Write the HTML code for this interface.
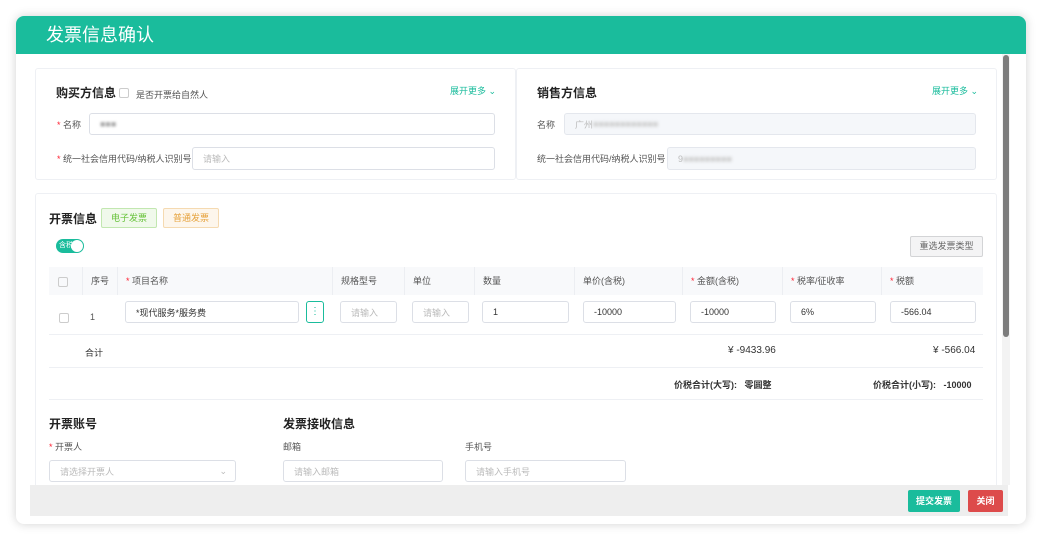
<!DOCTYPE html>
<html><head><meta charset="utf-8"><style>
*{box-sizing:border-box;margin:0;padding:0}
body{width:1042px;height:541px;background:#fff;position:relative;overflow:hidden;font-family:"Liberation Sans","Noto Sans CJK SC",sans-serif;color:#333}
.a{position:absolute}
.modal{left:16px;top:16px;width:1010px;height:508px;border-radius:8px;background:#fff;box-shadow:0 0 10px rgba(0,0,0,.18);overflow:hidden}
.hd{left:0;top:0;width:1010px;height:38px;background:#1abc9c;color:#fff;font-size:18px;line-height:38px;padding-left:30px}
.card{border:1px solid #eef0f4;border-radius:3px;background:#fff}
.t{font-size:12px;font-weight:bold;color:#222}
.s{font-size:9px;color:#555;white-space:nowrap}
.r{color:#f23}
.in{border:1px solid #dcdfe6;border-radius:3px;background:#fff;font-size:9px;color:#bbb;padding-left:10px;display:flex;align-items:center}
.dis{background:#f5f7fa;border-color:#e4e7ed}
.more{font-size:9px;color:#1abc9c}
.th{top:267px;height:28px;background:#f8f9fb;font-size:9px;color:#555;line-height:28px;padding-left:8px;border-right:1px solid #eceef2}
.ln{height:1px;background:#eef0f4;left:49px;width:934px}
.v{color:#333}
</style></head><body>
<div class="a modal">
<div class="a hd">发票信息确认</div>
</div>
<!-- buyer -->
<div class="a card" style="left:35px;top:68px;width:481px;height:112px"></div>
<div class="a t" style="left:56px;top:84px">购买方信息</div>
<div class="a" style="left:119px;top:88px;width:10px;height:10px;border:1px solid #ccc;border-radius:2px"></div>
<div class="a s" style="left:136px;top:88px">是否开票给自然人</div>
<div class="a more" style="left:450px;top:84px">展开更多 ⌄</div>
<div class="a s" style="left:57px;top:118px"><span class="r">* </span>名称</div>
<div class="a in" style="left:89px;top:113px;width:406px;height:22px"><span style="color:#aaa;filter:blur(1.2px)">■■■</span></div>
<div class="a s" style="left:57px;top:152px"><span class="r">* </span>统一社会信用代码/纳税人识别号</div>
<div class="a in" style="left:192px;top:147px;width:303px;height:23px">请输入</div>
<!-- seller -->
<div class="a card" style="left:516px;top:68px;width:481px;height:112px"></div>
<div class="a t" style="left:537px;top:84px">销售方信息</div>
<div class="a more" style="left:932px;top:84px">展开更多 ⌄</div>
<div class="a s" style="left:537px;top:118px">名称</div>
<div class="a in dis" style="left:564px;top:113px;width:412px;height:22px">广州<span style="filter:blur(1.5px);color:#ccc">■■■■■■■■■■■■</span></div>
<div class="a s" style="left:537px;top:152px">统一社会信用代码/纳税人识别号</div>
<div class="a in dis" style="left:667px;top:147px;width:309px;height:23px">9<span style="filter:blur(1.5px);color:#ccc">■■■■■■■■■</span></div>
<!-- invoice card -->
<div class="a card" style="left:35px;top:193px;width:962px;height:310px"></div>
<div class="a t" style="left:49px;top:210px">开票信息</div>
<div class="a" style="left:101px;top:208px;width:56px;height:20px;background:#f0f9eb;border:1px solid #c2e7b0;border-radius:2px;color:#67c23a;font-size:9px;text-align:center;line-height:18px">电子发票</div>
<div class="a" style="left:163px;top:208px;width:56px;height:20px;background:#fdf6ec;border:1px solid #f5dab1;border-radius:2px;color:#e6a23c;font-size:9px;text-align:center;line-height:18px">普通发票</div>
<div class="a" style="left:56px;top:239px;width:28px;height:14px;border-radius:7px;background:#1abc9c"><span style="position:absolute;left:3px;top:1px;font-size:7px;color:#fff">含税</span><span style="position:absolute;right:1px;top:1px;width:12px;height:12px;border-radius:50%;background:#fff"></span></div>
<div class="a" style="left:910px;top:236px;width:73px;height:21px;background:#f4f4f5;border:1px solid #d3d4d6;border-radius:2px;font-size:9px;color:#666;text-align:center;line-height:19px">重选发票类型</div>
<!-- table head -->
<div class="a th" style="left:49px;width:34px"><span style="display:inline-block;width:10px;height:10px;border:1px solid #ccc;border-radius:2px;vertical-align:middle;margin-left:1px"></span></div>
<div class="a th" style="left:83px;width:35px">序号</div>
<div class="a th" style="left:118px;width:215px"><span class="r">* </span>项目名称</div>
<div class="a th" style="left:333px;width:72px">规格型号</div>
<div class="a th" style="left:405px;width:70px">单位</div>
<div class="a th" style="left:475px;width:100px">数量</div>
<div class="a th" style="left:575px;width:108px">单价(含税)</div>
<div class="a th" style="left:683px;width:100px"><span class="r">* </span>金额(含税)</div>
<div class="a th" style="left:783px;width:99px"><span class="r">* </span>税率/征收率</div>
<div class="a th" style="left:882px;width:101px;border-right:none"><span class="r">* </span>税额</div>
<!-- row -->
<div class="a" style="left:59px;top:313px;width:10px;height:10px;border:1px solid #ccc;border-radius:2px"></div>
<div class="a s" style="left:90px;top:312px">1</div>
<div class="a in v" style="left:125px;top:301px;width:174px;height:22px;color:#333">*现代服务*服务费</div>
<div class="a" style="left:306px;top:301px;width:18px;height:22px;border:1px solid #1abc9c;border-radius:3px;color:#1abc9c;font-size:10px;text-align:center;line-height:20px">⋮</div>
<div class="a in" style="left:340px;top:301px;width:57px;height:22px">请输入</div>
<div class="a in" style="left:412px;top:301px;width:57px;height:22px">请输入</div>
<div class="a in" style="left:482px;top:301px;width:87px;height:22px;color:#333">1</div>
<div class="a in" style="left:583px;top:301px;width:93px;height:22px;color:#333">-10000</div>
<div class="a in" style="left:690px;top:301px;width:86px;height:22px;color:#333">-10000</div>
<div class="a in" style="left:790px;top:301px;width:86px;height:22px;color:#333">6%</div>
<div class="a in" style="left:890px;top:301px;width:86px;height:22px;color:#333">-566.04</div>
<div class="a ln" style="top:334px"></div>
<div class="a s" style="left:85px;top:346px;color:#333">合计</div>
<div class="a" style="left:728px;top:345px;font-size:10px;color:#333">¥ -9433.96</div>
<div class="a" style="left:933px;top:345px;font-size:10px;color:#333">¥ -566.04</div>
<div class="a ln" style="top:367px"></div>
<div class="a" style="left:674px;top:378px;font-size:9px;font-weight:bold;color:#333">价税合计(大写):&nbsp;&nbsp; 零圆整</div>
<div class="a" style="left:873px;top:378px;font-size:9px;font-weight:bold;color:#333">价税合计(小写):&nbsp;&nbsp; -10000</div>
<div class="a ln" style="top:399px"></div>
<div class="a t" style="left:49px;top:415px">开票账号</div>
<div class="a t" style="left:283px;top:415px">发票接收信息</div>
<div class="a s" style="left:49px;top:440px"><span class="r">* </span>开票人</div>
<div class="a s" style="left:283px;top:440px">邮箱</div>
<div class="a s" style="left:465px;top:440px">手机号</div>
<div class="a in" style="left:49px;top:460px;width:187px;height:22px">请选择开票人<span style="position:absolute;right:8px;color:#bbb">⌄</span></div>
<div class="a in" style="left:283px;top:460px;width:160px;height:22px">请输入邮箱</div>
<div class="a in" style="left:465px;top:460px;width:161px;height:22px">请输入手机号</div>
<!-- scrollbar -->
<div class="a" style="left:1002px;top:54px;width:8px;height:431px;background:#f3f3f3"></div>
<div class="a" style="left:1003px;top:55px;width:6px;height:282px;background:#7d7d7d;border-radius:3px"></div>
<!-- footer -->
<div class="a" style="left:30px;top:485px;width:978px;height:31px;background:#eeeeee"></div>
<div class="a" style="left:908px;top:490px;width:52px;height:22px;background:#1abc9c;border-radius:2px;color:#fff;font-size:9px;font-weight:bold;text-align:center;line-height:22px">提交发票</div>
<div class="a" style="left:968px;top:490px;width:35px;height:22px;background:#dd4b4b;border-radius:2px;color:#fff;font-size:9px;font-weight:bold;text-align:center;line-height:22px">关闭</div>
</body></html>
